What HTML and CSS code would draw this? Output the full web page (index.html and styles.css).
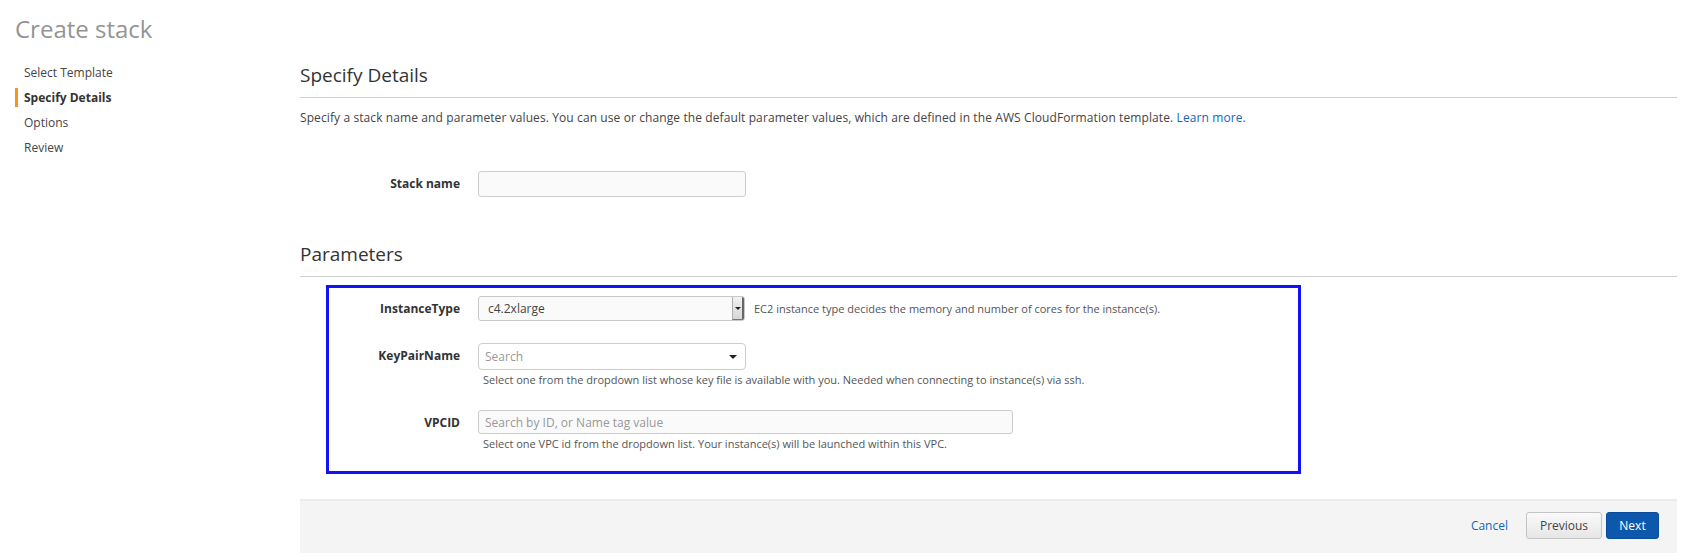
FILE: index.html
```html
<!DOCTYPE html>
<html>
<head>
<meta charset="utf-8">
<link rel="stylesheet" href="styles.css">
</head>
<body>
<div class="page">
  <aside class="sidebar">
    <h1 class="title">Create stack</h1>
    <ul class="steps">
      <li class="step">Select Template</li>
      <li class="step active">Specify Details</li>
      <li class="step">Options</li>
      <li class="step">Review</li>
    </ul>
  </aside>
  <main class="main">
    <h2 class="section-title">Specify Details</h2>
    <p class="intro">Specify a stack name and parameter values. You can use or change the default parameter values, which are defined in the AWS CloudFormation template. <a class="link" href="#">Learn more.</a></p>

    <div class="stack-row">
      <label class="label">Stack name</label>
      <div class="input stack-input"></div>
    </div>

    <h2 class="section-title params-title">Parameters</h2>

    <div class="params">
      <div class="param">
        <label class="label">InstanceType</label>
        <div class="field-inline">
          <div class="select">
            <span class="select-value">c4.2xlarge</span>
            <span class="select-btn"><span class="tri-small"></span></span>
          </div>
          <span class="help">EC2 instance type decides the memory and number of cores for the instance(s).</span>
        </div>
      </div>
      <div class="param">
        <label class="label">KeyPairName</label>
        <div class="field">
          <div class="input combo">
            <span class="placeholder">Search</span>
            <span class="caret"></span>
          </div>
          <div class="help below">Select one from the dropdown list whose key file is available with you. Needed when connecting to instance(s) via ssh.</div>
        </div>
      </div>
      <div class="param">
        <label class="label">VPCID</label>
        <div class="field">
          <div class="input vpc">
            <span class="placeholder">Search by ID, or Name tag value</span>
          </div>
          <div class="help below">Select one VPC id from the dropdown list. Your instance(s) will be launched within this VPC.</div>
        </div>
      </div>
    </div>

    <div class="footer">
      <a class="link cancel" href="#">Cancel</a>
      <button class="btn btn-prev">Previous</button>
      <button class="btn btn-next">Next</button>
    </div>
  </main>
</div>
</body>
</html>
```
FILE: styles.css
```css
* { box-sizing: border-box; }
html, body { margin: 0; padding: 0; background: #fff; }
body {
  font-family: "Open Sans", "Noto Sans", "DejaVu Sans", sans-serif;
  color: #444;
  font-size: 12px;
}
.page {
  display: grid;
  grid-template-columns: 300px 1377px;
}
.sidebar { padding: 13px 0 0 15px; }
.title {
  margin: 0;
  font-size: 24px;
  line-height: 32px;
  font-weight: 400;
  color: #949494;
}
.steps {
  list-style: none;
  margin: 15px 0 0 0;
  padding: 0;
}
.step {
  display: flex;
  align-items: center;
  height: 25px;
  font-size: 12px;
  color: #444;
}
.step::before {
  content: "";
  width: 3px;
  height: 19px;
  margin-right: 6px;
  background: transparent;
}
.step.active { font-weight: 700; color: #333; }
.step.active::before { background: #f7931e; }

.main { padding-top: 61px; }
.section-title {
  margin: 0;
  font-size: 19px;
  line-height: 28px;
  font-weight: 400;
  color: #333;
  padding-bottom: 8px;
  border-bottom: 1px solid #cfcfcf;
}
.intro {
  margin: 11px 0 0 0;
  line-height: 18px;
  font-size: 12px;
  letter-spacing: 0.1px;
  color: #444;
}
.link { color: #1166bb; text-decoration: none; }

.stack-row {
  display: grid;
  grid-template-columns: 160px 268px;
  column-gap: 18px;
  align-items: center;
  margin-top: 44px;
}
.label {
  text-align: right;
  font-weight: 700;
  font-size: 12px;
  line-height: 18px;
  color: #333;
}
.input {
  height: 26px;
  border: 1px solid #cccccc;
  border-radius: 3px;
  background: #fafafa;
  display: flex;
  align-items: center;
}
.params-title { margin-top: 43px; }

.params {
  width: 975px;
  margin: 8px 0 0 26px;
  border: 3px solid #1212f5;
  padding: 8px 0 19px 0;
  display: flex;
  flex-direction: column;
  gap: 22px;
}
.param {
  display: grid;
  grid-template-columns: 131px 1fr;
  column-gap: 18px;
  align-items: start;
}
.param .label { padding-top: 4px; }
.field-inline { display: flex; align-items: center; gap: 9px; }
.select {
  width: 267px;
  height: 25px;
  border: 1px solid #c8c8c8;
  border-radius: 3px;
  background: #fafafa;
  display: flex;
  align-items: stretch;
  overflow: hidden;
}
.select-value {
  flex: 1;
  padding-left: 9px;
  line-height: 23px;
  font-size: 12px;
  color: #444;
}
.select-btn {
  width: 12px;
  background: linear-gradient(#f2f2f2, #d6d6d6);
  border-left: 1px solid #b0b0b0;
  border-right: 2px solid #666;
  border-bottom: 1px solid #777;
  display: flex;
  align-items: center;
  justify-content: center;
}
.tri-small {
  width: 0; height: 0;
  border-left: 3px solid transparent;
  border-right: 3px solid transparent;
  border-top: 3px solid #222;
}
.help {
  font-size: 11px;
  line-height: 16px;
  color: #555;
}
.help.below { margin-top: 2px; padding-left: 5px; }
.combo {
  width: 268px;
  height: 27px;
  border-radius: 4px;
  background: #fff;
  justify-content: space-between;
  padding: 0 8px 0 6px;
}
.placeholder { color: #999; font-size: 12px; }
.caret {
  width: 0; height: 0;
  border-left: 4px solid transparent;
  border-right: 4px solid transparent;
  border-top: 4px solid #222;
}
.vpc {
  width: 535px;
  height: 24px;
  padding-left: 6px;
}

.footer {
  margin-top: 25px;
  height: 54px;
  background: #f4f4f4;
  border-top: 2px solid #ebebeb;
  display: flex;
  align-items: center;
  justify-content: flex-end;
  padding: 0 18px 3px 0;
}
.cancel { font-size: 12px; margin-right: 18px; }
.btn {
  font-family: inherit;
  font-size: 12px;
  height: 27px;
  border-radius: 3px;
  padding: 0;
  cursor: pointer;
}
.btn-prev {
  width: 76px;
  background: linear-gradient(#fafafa, #e6e6e6);
  border: 1px solid #c4c4c4;
  color: #444;
  margin-right: 4px;
}
.btn-next {
  width: 53px;
  background: #0d57ad;
  border: 1px solid #0a4c99;
  color: #fff;
}
```
